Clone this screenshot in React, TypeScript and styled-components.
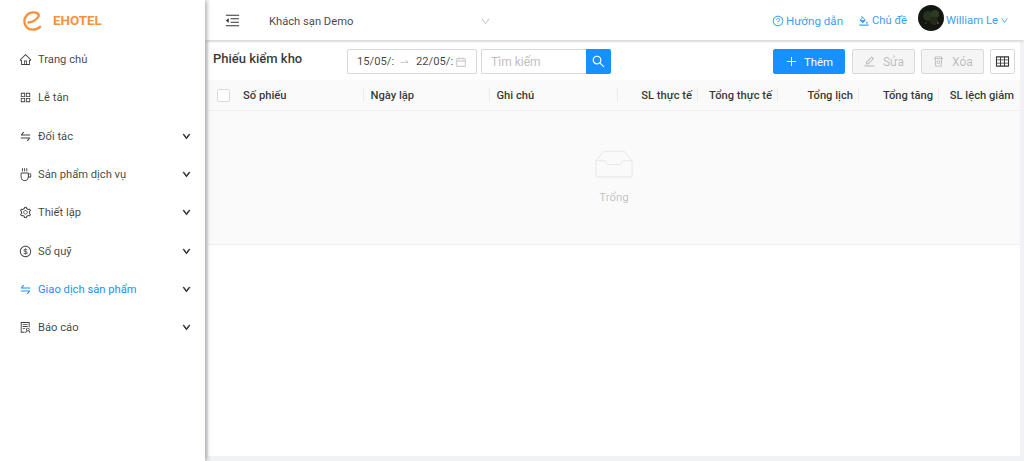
import styled, { createGlobalStyle } from "styled-components"
import { ReactNode } from "react"
import {
  AiOutlineHome,
  AiOutlineAppstore,
  AiOutlineSwap,
  AiOutlineCoffee,
  AiOutlineSetting,
  AiOutlineDollar,
  AiOutlineSolution,
  AiOutlineDown,
  AiOutlineMenuFold,
  AiOutlineQuestionCircle,
  AiOutlineBgColors,
  AiOutlineSearch,
  AiOutlineCalendar,
  AiOutlineSwapRight,
  AiOutlinePlus,
  AiOutlineEdit,
  AiOutlineRest,
  AiOutlineTable,
} from "react-icons/ai"

const GlobalStyle = createGlobalStyle`
  html, body {
    margin: 0;
    padding: 0;
    background: #f0f2f5;
    font-family: Roboto, "Liberation Sans", sans-serif;
    font-size: 11.2px;
    color: rgba(0, 0, 0, 0.85);
    overflow: hidden;
  }
  * {
    box-sizing: border-box;
  }
`

const menu: { label: string; icon: ReactNode; arrow?: boolean; active?: boolean }[] = [
  { label: "Trang chủ", icon: <AiOutlineHome /> },
  { label: "Lễ tân", icon: <AiOutlineAppstore /> },
  { label: "Đối tác", icon: <AiOutlineSwap />, arrow: true },
  { label: "Sản phẩm dịch vụ", icon: <AiOutlineCoffee />, arrow: true },
  { label: "Thiết lập", icon: <AiOutlineSetting />, arrow: true },
  { label: "Sổ quỹ", icon: <AiOutlineDollar />, arrow: true },
  { label: "Giao dịch sản phẩm", icon: <AiOutlineSwap />, arrow: true, active: true },
  { label: "Báo cáo", icon: <AiOutlineSolution />, arrow: true },
]

const columns = [
  { label: "Số phiếu" },
  { label: "Ngày lập" },
  { label: "Ghi chú" },
  { label: "SL thực tế", right: true },
  { label: "Tổng thực tế", right: true },
  { label: "Tổng lịch", right: true },
  { label: "Tổng tăng", right: true },
  { label: "SL lệch giảm", right: true },
]

function Logo() {
  return (
    <svg width="19" height="20" viewBox="0 0 19 20" fill="none" stroke="#f5923e" strokeWidth="2.4" strokeLinecap="round">
      <path d="M5.500 11.500C9.500 11 14 8.500 15.500 5.500C16.500 3 14 1.400 10.500 1.400C5 1.400 1.400 5.500 1.400 10.500C1.400 15.500 5 18.600 9.500 18.600C12.500 18.600 15 17.800 17 15.800" />
    </svg>
  )
}

function EmptyIcon() {
  return (
    <svg width="38" height="29" viewBox="0 0 40 30" fill="none">
      <ellipse cx="20" cy="26" rx="25" ry="4" fill="#f5f5f5" />
      <path
        d="M1 11L8 2.500C8.500 1.500 9 1 10 1H30C31 1 31.500 1.500 32 2.500L39 11V26C39 27 38 28 37 28H3C2 28 1 27 1 26Z"
        fill="#fafafa"
        stroke="#e6e6e6"
      />
      <path d="M1 11H11C12 11 12 12 12 13C12 14.500 13 15 14 15H26C27 15 28 14.500 28 13C28 12 28 11 29 11H39" stroke="#e6e6e6" />
    </svg>
  )
}

export default function App() {
  return (
    <Page>
      <GlobalStyle />
      <Sidebar>
        <Brand>
          <Logo />
          <BrandName>EHOTEL</BrandName>
        </Brand>
        <Menu>
          {menu.map((item) => (
            <MenuItem key={item.label} $active={item.active}>
              <MenuIcon>{item.icon}</MenuIcon>
              <MenuLabel>{item.label}</MenuLabel>
              {item.arrow && (
                <MenuArrow>
                  <AiOutlineDown size={9} stroke="currentColor" strokeWidth={110} />
                </MenuArrow>
              )}
            </MenuItem>
          ))}
        </Menu>
      </Sidebar>
      <Main>
        <Header>
          <CollapseButton>
            <AiOutlineMenuFold size={17} />
          </CollapseButton>
          <HotelSelect>
            Khách sạn Demo
            <AiOutlineDown size={11} color="#c4c4c4" />
          </HotelSelect>
          <HeaderLinks>
            <HelpLink>
              <AiOutlineQuestionCircle size={12} />
              Hướng dẫn
            </HelpLink>
            <HeaderLink>
              <AiOutlineBgColors size={12} />
              Chủ đề
            </HeaderLink>
            <UserLink>
              <Avatar>
                <svg width="26" height="26" viewBox="0 0 26 26">
                  <circle cx="10" cy="11" r="5" fill="#27331f" />
                  <circle cx="17" cy="9" r="4" fill="#2f3a25" />
                  <circle cx="16" cy="16" r="4" fill="#232a1c" />
                  <circle cx="20" cy="18" r="1" fill="#6b3d86" />
                  <circle cx="8" cy="18" r="0.800" fill="#5f3a78" />
                </svg>
              </Avatar>
              William Le
              <AiOutlineDown size={9} />
            </UserLink>
          </HeaderLinks>
        </Header>
        <Content>
          <Toolbar>
            <Title>Phiếu kiểm kho</Title>
            <DateRange>
              <DateText>15/05/:</DateText>
              <AiOutlineSwapRight size={13} color="#bbb" />
              <DateText>22/05/:</DateText>
              <CalendarSlot>
                <AiOutlineCalendar size={12} color="#bfbfbf" />
              </CalendarSlot>
            </DateRange>
            <SearchBox>
              <SearchInput placeholder="Tìm kiếm" />
              <SearchButton>
                <AiOutlineSearch size={15} />
              </SearchButton>
            </SearchBox>
            <Actions>
              <PrimaryButton>
                <AiOutlinePlus size={13} />
                Thêm
              </PrimaryButton>
              <DisabledButton>
                <AiOutlineEdit size={13} />
                Sửa
              </DisabledButton>
              <DisabledButton>
                <AiOutlineRest size={13} />
                Xóa
              </DisabledButton>
              <IconButton>
                <AiOutlineTable size={15} color="#333" />
              </IconButton>
            </Actions>
          </Toolbar>
          <TableHead>
            {columns.map((col, i) => (
              <HeadCell key={col.label} $right={col.right} $first={i === 0}>
                {i === 0 && <Check />}
                {col.label}
              </HeadCell>
            ))}
          </TableHead>
          <TableEmpty>
            <EmptyIcon />
            <EmptyText>Trống</EmptyText>
          </TableEmpty>
        </Content>
      </Main>
    </Page>
  )
}

const Page = styled.div`
  display: flex;
  width: 1024px;
  height: 461px;
  overflow: hidden;
`

const Sidebar = styled.aside`
  width: 205px;
  flex-shrink: 0;
  background: white;
  box-shadow: 2px 0 4px rgba(0, 0, 0, 0.3);
  z-index: 2;
`

const Brand = styled.div`
  display: flex;
  align-items: center;
  height: 40px;
  padding: 1px 0 0 23px;
  gap: 11px;
`

const BrandName = styled.span`
  font-size: 13.4px;
  font-weight: 700;
  color: #f5923e;
`

const Menu = styled.nav`
  display: flex;
  flex-direction: column;
  padding-top: 0.5px;
`

const MenuItem = styled.div<{ $active?: boolean }>`
  display: flex;
  align-items: center;
  height: 38.3px;
  padding: 0 14px 0 19px;
  color: ${(p) => (p.$active ? "#1890ff" : "rgba(0, 0, 0, 0.75)")};
  font-size: 11.2px;
`

const MenuIcon = styled.span`
  display: flex;
  width: 19px;
  font-size: 13px;
`

const MenuLabel = styled.span`
  flex: 1;
`

const MenuArrow = styled.span`
  display: flex;
  color: #333;
`

const Main = styled.div`
  flex: 1;
  display: flex;
  flex-direction: column;
  min-width: 0;
`

const Header = styled.header`
  display: flex;
  align-items: center;
  height: 40px;
  flex-shrink: 0;
  background: white;
  box-shadow: 0 1px 3px rgba(0, 0, 0, 0.15);
  padding: 1px 15px 0 19px;
  z-index: 1;
`

const CollapseButton = styled.div`
  display: flex;
  width: 45px;
  color: #333;
`

const HotelSelect = styled.div`
  display: flex;
  align-items: center;
  justify-content: space-between;
  width: 222px;
  padding-top: 1px;
  font-size: 11.2px;
  color: rgba(0, 0, 0, 0.75);
`

const HeaderLinks = styled.div`
  display: flex;
  align-items: center;
  margin-left: auto;
  gap: 15px;
  color: #40a0f5;
  font-size: 11.2px;
`

const HeaderLink = styled.span`
  display: flex;
  align-items: center;
  gap: 2px;
`

const HelpLink = styled(HeaderLink)`
  font-size: 11.6px;
`

const UserLink = styled(HeaderLink)`
  gap: 2px;
  margin-left: -4px;
  font-size: 11.3px;
`

const Avatar = styled.span`
  display: flex;
  width: 26px;
  height: 26px;
  margin-top: -6px;
  border-radius: 50%;
  overflow: hidden;
  background: #14170f;
`

const Content = styled.main`
  flex: 1;
  margin: 2px 4px 5px 3px;
  background: white;
`

const Toolbar = styled.div`
  display: flex;
  align-items: flex-start;
  height: 38px;
  padding: 7px 5px 0 5px;
`

const Title = styled.h1`
  width: 134px;
  margin: 0;
  font-size: 13px;
  font-weight: 500;
  line-height: 19px;
  color: rgba(0, 0, 0, 0.8);
`

const DateRange = styled.div`
  display: flex;
  align-items: center;
  gap: 6px;
  width: 130px;
  height: 25px;
  padding: 0 9px;
  border: 1px solid #d9d9d9;
  border-radius: 2px;
  font-size: 11.2px;
  color: rgba(0, 0, 0, 0.75);
`

const DateText = styled.span`
  width: 36px;
  white-space: nowrap;
`

const CalendarSlot = styled.span`
  display: flex;
  margin-left: -3px;
`

const SearchBox = styled.div`
  display: flex;
  width: 130px;
  height: 25px;
  margin-left: 4px;
`

const SearchInput = styled.input`
  flex: 1;
  min-width: 0;
  padding: 0 9px;
  border: 1px solid #d9d9d9;
  border-right: none;
  border-radius: 2px 0 0 2px;
  outline: none;
  font: 12px Roboto, sans-serif;
  &::placeholder {
    color: #bfbfbf;
  }
`

const SearchButton = styled.button`
  display: flex;
  align-items: center;
  justify-content: center;
  width: 25px;
  padding: 0;
  border: none;
  border-radius: 0 2px 2px 0;
  background: #1890ff;
  color: white;
`

const Actions = styled.div`
  display: flex;
  gap: 6px;
  margin-left: auto;
`

const BaseButton = styled.button`
  display: flex;
  align-items: center;
  justify-content: center;
  height: 25px;
  padding: 0;
  border-radius: 2px;
  font: 12px Roboto, sans-serif;
`

const PrimaryButton = styled(BaseButton)`
  gap: 6px;
  width: 72px;
  margin-right: 1px;
  border: 1px solid #1890ff;
  background: #1890ff;
  color: white;
  font-size: 11.4px;
`

const DisabledButton = styled(BaseButton)`
  gap: 7px;
  width: 63px;
  border: 1px solid #d9d9d9;
  background: #f5f5f5;
  color: rgba(0, 0, 0, 0.25);
`

const IconButton = styled(BaseButton)`
  width: 25px;
  border: 1px solid #d9d9d9;
  background: white;
`

const TableHead = styled.div`
  display: grid;
  grid-template-columns: 156px 126px 128px 80px 80px 81px 80px 81px;
  height: 31px;
  background: #fafafa;
  border-bottom: 1px solid #f0f0f0;
`

const HeadCell = styled.div<{ $right?: boolean; $first?: boolean }>`
  display: flex;
  align-items: center;
  justify-content: ${(p) => (p.$right ? "flex-end" : "flex-start")};
  padding: 0 6px;
  padding-left: ${(p) => (p.$first ? "9px" : "6.500px")};
  font-size: 11.2px;
  font-weight: 500;
  white-space: nowrap;
  color: rgba(0, 0, 0, 0.8);
  position: relative;
  &:not(:last-child)::after {
    content: "";
    position: absolute;
    right: 0;
    top: 8px;
    bottom: 8px;
    width: 1px;
    background: #ececec;
  }
`

const Check = styled.span`
  width: 13px;
  height: 13px;
  margin-right: 13px;
  border: 1px solid #d9d9d9;
  border-radius: 2px;
  background: white;
`

const TableEmpty = styled.div`
  display: flex;
  flex-direction: column;
  align-items: center;
  height: 134px;
  padding-top: 39px;
  background: #fafafa;
  border-bottom: 1px solid #f0f0f0;
`

const EmptyText = styled.div`
  margin-top: 11px;
  font-size: 11.4px;
  color: rgba(0, 0, 0, 0.25);
`
